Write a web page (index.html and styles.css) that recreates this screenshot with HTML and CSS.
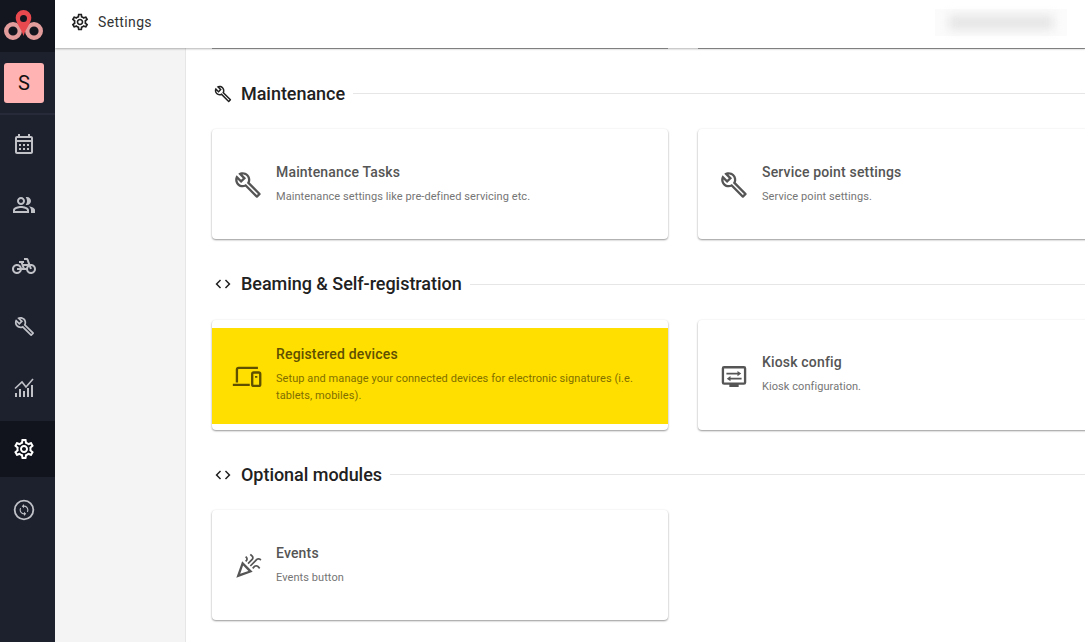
FILE: index.html
```html
<!DOCTYPE html>
<html lang="en">
<head>
  <meta charset="UTF-8">
  <meta name="viewport" content="width=device-width, initial-scale=1.0">
  <title>Settings</title>
  <link rel="stylesheet" href="styles.css">
</head>
<body>

<div class="app">
  <!-- Main navigation -->
  <nav class="sidebar">
    <div class="logo">
      <svg width="40" height="32" viewBox="0 0 40 32">
        <circle cx="9" cy="21" r="6.800" fill="none" stroke="#e39c9c" stroke-width="4.400"/>
        <circle cx="30" cy="21" r="6.800" fill="none" stroke="#e39c9c" stroke-width="4.400"/>
        <path d="M19.500 0a7.800 7.800 0 0 1 7.800 7.800c0 5-5.200 10-7.800 18.200-2.600-8.200-7.800-13.200-7.800-18.200A7.800 7.800 0 0 1 19.500 0z" fill="#e8494f"/>
        <circle cx="19.500" cy="8.500" r="3.500" fill="#13161f"/>
      </svg>
    </div>
    <div class="avatar-wrap">
      <div class="avatar">S</div>
    </div>
    <a class="nav-item">
      <svg width="24" height="24" viewBox="0 0 24 24"><path d="M19 4h-1V2h-2v2H8V2H6v2H5c-1.100 0-2 .9-2 2v14c0 1.100.9 2 2 2h14c1.100 0 2-.9 2-2V6c0-1.100-.9-2-2-2zm0 16H5V10h14v10zm0-12H5V6h14v2zM9 14H7v-2h2v2zm4 0h-2v-2h2v2zm4 0h-2v-2h2v2zm-8 4H7v-2h2v2zm4 0h-2v-2h2v2zm4 0h-2v-2h2v2z"/></svg>
    </a>
    <a class="nav-item">
      <svg width="24" height="24" viewBox="0 0 24 24"><path d="M16.670 13.130C18.040 14.060 19 15.320 19 17v3h4v-3c0-2.180-3.570-3.470-6.330-3.870zM15 12c2.210 0 4-1.790 4-4s-1.790-4-4-4c-.47 0-.91.1-1.330.24C14.500 5.270 15 6.580 15 8s-.5 2.730-1.330 3.760c.42.14.86.24 1.330.24zM9 12c2.210 0 4-1.790 4-4s-1.790-4-4-4-4 1.790-4 4 1.790 4 4 4zm0-6c1.100 0 2 .9 2 2s-.9 2-2 2-2-.9-2-2 .9-2 2-2zM9 13c-2.670 0-8 1.340-8 4v3h16v-3c0-2.660-5.330-4-8-4zm6 5H3v-.99C3.200 16.290 6.300 15 9 15s5.800 1.290 6 2v1z"/></svg>
    </a>
    <a class="nav-item">
      <svg width="24" height="24" viewBox="0 0 24 24"><path d="M18.180 10l-1.700-4.680C16.190 4.530 15.440 4 14.600 4H12v2h2.600l1.460 4h-4.810l-.36-1H12V7H7v2h1.750l1.820 5H9.900c-.44-2.230-2.310-3.880-4.650-3.990C2.450 9.870 0 12.200 0 15c0 2.800 2.200 5 5 5 2.460 0 4.450-1.690 4.900-4h4.200c.44 2.230 2.310 3.880 4.650 3.990 2.800.13 5.250-2.190 5.250-5 0-2.800-2.200-5-5-5h-.82zM7.820 16c-.4 1.170-1.490 2-2.820 2-1.680 0-3-1.320-3-3s1.320-3 3-3c1.330 0 2.420.83 2.820 2H5v2h2.820zm6.280-2h-1.400l-.73-2H15c-.44.58-.76 1.250-.9 2zm4.900 4c-1.680 0-3-1.320-3-3 0-.93.41-1.730 1.050-2.280l.96 2.640 1.880-.68-.97-2.670c.03 0 .06-.01.09-.01 1.680 0 3 1.320 3 3s-1.330 3-3.010 3z"/></svg>
    </a>
    <a class="nav-item">
      <svg width="21" height="21" viewBox="0 0 24 24"><use href="#icon-build"/></svg>
    </a>
    <a class="nav-item">
      <svg width="24" height="24" viewBox="0 0 24 24"><path d="M3 17h2v4H3zM7 13h2v8H7zM11 15h2v6h-2zM15 12h2v9h-2zM19 9h2v12h-2z"/><path d="M3 12.500l7-6.500 4 5 7-8" fill="none" stroke="currentColor" stroke-width="1.600"/></svg>
    </a>
    <a class="nav-item is-active">
      <svg width="24" height="24" viewBox="0 0 24 24"><use href="#icon-settings"/></svg>
    </a>
    <a class="nav-item">
      <svg width="24" height="24" viewBox="0 0 24 24"><circle cx="12" cy="12" r="9.300" fill="none" stroke="currentColor" stroke-width="1.800"/><path transform="translate(5.400 5.400) scale(.55)" d="M12 4V1L8 5l4 4V6c3.310 0 6 2.690 6 6 0 1.010-.25 1.970-.7 2.800l1.460 1.460C19.540 15.030 20 13.570 20 12c0-4.420-3.580-8-8-8zm0 14c-3.310 0-6-2.690-6-6 0-1.010.25-1.970.7-2.800L5.240 7.740C4.460 8.970 4 10.430 4 12c0 4.420 3.580 8 8 8v3l4-4-4-4v3z"/></svg>
    </a>
  </nav>

  <div class="main">
    <header class="topbar">
      <svg class="topbar-icon" width="20" height="20" viewBox="0 0 24 24"><use href="#icon-settings"/></svg>
      <span class="topbar-title">Settings</span>
      <div class="user-box"><div class="user-blur"></div></div>
    </header>

    <div class="page">
      <aside class="subnav"></aside>

      <div class="content">
        <div class="card-row stub-row">
          <div class="card-stub"></div>
          <div class="card-stub"></div>
        </div>

        <section class="section">
          <h2 class="section-title">
            <svg width="18" height="18" viewBox="0 0 24 24"><use href="#icon-build"/></svg>
            <span>Maintenance</span>
          </h2>
          <div class="card-row">
            <div class="card">
              <div class="card-inner">
                <svg class="card-icon" width="28" height="28" viewBox="0 0 24 24"><use href="#icon-build"/></svg>
                <div class="card-text">
                  <h3>Maintenance Tasks</h3>
                  <p>Maintenance settings like pre-defined servicing etc.</p>
                </div>
              </div>
            </div>
            <div class="card">
              <div class="card-inner">
                <svg class="card-icon" width="28" height="28" viewBox="0 0 24 24"><use href="#icon-build"/></svg>
                <div class="card-text">
                  <h3>Service point settings</h3>
                  <p>Service point settings.</p>
                </div>
              </div>
            </div>
          </div>
        </section>

        <section class="section">
          <h2 class="section-title">
            <svg width="18" height="18" viewBox="0 0 24 24"><use href="#icon-code"/></svg>
            <span>Beaming &amp; Self-registration</span>
          </h2>
          <div class="card-row">
            <div class="card highlighted">
              <div class="card-inner">
                <svg class="card-icon line-icon" width="28" height="28" viewBox="0 0 24 24">
                  <path d="M2.500 17.500V6.500a1.500 1.500 0 0 1 1.500-1.500h16.500M-1 19.600h14.500"/>
                  <rect x="15.600" y="9" width="6.900" height="11.500" rx="1.300"/>
                  <path d="M19 12v1.500"/>
                </svg>
                <div class="card-text">
                  <h3>Registered devices</h3>
                  <p>Setup and manage your connected devices for electronic signatures (i.e. tablets, mobiles).</p>
                </div>
              </div>
            </div>
            <div class="card">
              <div class="card-inner">
                <svg class="card-icon" width="28" height="28" viewBox="0 0 24 24">
                  <path d="M3.500 3.500h17a2 2 0 0 1 2 2v12a2 2 0 0 1-2 2H16v2H8v-2H3.500a2 2 0 0 1-2-2v-12a2 2 0 0 1 2-2zm0 2v12h17v-12z" fill-rule="evenodd"/>
                  <path d="M5.500 9.200H15v1.500H5.500zM15 7.700l3.200 2.250L15 12.200zM9 13.500h9.500V15H9zM9 12l-3.200 2.250L9 16.500z"/>
                </svg>
                <div class="card-text">
                  <h3>Kiosk config</h3>
                  <p>Kiosk configuration.</p>
                </div>
              </div>
            </div>
          </div>
        </section>

        <section class="section">
          <h2 class="section-title">
            <svg width="18" height="18" viewBox="0 0 24 24"><use href="#icon-code"/></svg>
            <span>Optional modules</span>
          </h2>
          <div class="card-row">
            <div class="card">
              <div class="card-inner">
                <svg class="card-icon" width="28" height="28" viewBox="0 0 24 24"><path d="M2 22l14-5-9-9-5 14zm10.350-5.820L5.300 18.700l2.520-7.050 4.530 4.530zM14.530 12.530l5.590-5.590c.49-.49 1.280-.49 1.770 0l.59.59 1.060-1.060-.59-.59c-1.070-1.070-2.820-1.070-3.890 0l-5.590 5.590 1.060 1.060zM10.060 6.880l-.59.59 1.060 1.060.59-.59c1.070-1.070 1.070-2.820 0-3.890l-.59-.59-1.060 1.070.59.59c.48.48.48 1.280 0 1.760zM17.060 11.880l-1.590 1.590 1.060 1.060 1.590-1.590c.49-.49 1.280-.49 1.770 0l1.610 1.610 1.060-1.060-1.610-1.610c-1.080-1.070-2.820-1.070-3.890 0zM15.060 5.880l-3.590 3.590 1.060 1.060 3.590-3.590c1.070-1.070 1.070-2.820 0-3.890l-1.590-1.590-1.060 1.060 1.590 1.590c.48.490.48 1.290 0 1.770z"/></svg>
                <div class="card-text">
                  <h3>Events</h3>
                  <p>Events button</p>
                </div>
              </div>
            </div>
          </div>
        </section>
      </div>
    </div>
  </div>
</div>

<!-- Shared icons -->
<svg class="icon-defs" width="0" height="0">
  <defs>
    <path id="icon-build" d="M22.610 18.990l-9.080-9.080c.93-2.340.45-5.100-1.440-7C9.790.61 6.210.4 3.660 2.260L7.500 6.110 6.080 7.520 2.250 3.690C.39 6.230.6 9.820 2.900 12.110c1.860 1.860 4.570 2.350 6.890 1.480l9.110 9.110c.39.39 1.020.39 1.410 0l2.300-2.300c.4-.38.4-1.010 0-1.410zm-3 1.600l-9.460-9.460c-.61.45-1.290.72-2 .82-1.360.2-2.790-.21-3.830-1.250C3.370 9.760 2.930 8.500 3 7.260l3.090 3.090 4.240-4.240-3.090-3.090c1.240-.07 2.490.37 3.440 1.310 1.080 1.080 1.490 2.570 1.240 3.960-.12.71-.42 1.370-.88 1.960l9.450 9.450-.88.88z"/>
    <path id="icon-settings" d="M19.430 12.980c.04-.32.07-.64.07-.98 0-.34-.03-.66-.07-.98l2.110-1.650c.19-.15.24-.42.12-.64l-2-3.460c-.09-.16-.26-.25-.44-.25-.06 0-.12.01-.17.03l-2.490 1c-.52-.4-1.080-.73-1.690-.98l-.38-2.650C14.460 2.180 14.250 2 14 2h-4c-.25 0-.46.18-.49.42l-.38 2.650c-.61.25-1.170.59-1.690.98l-2.490-1c-.06-.02-.12-.03-.18-.03-.17 0-.34.09-.43.25l-2 3.460c-.13.22-.07.49.12.64l2.110 1.650c-.04.32-.07.65-.07.98 0 .33.03.66.07.98l-2.110 1.650c-.19.15-.24.42-.12.64l2 3.460c.09.16.26.25.44.25.06 0 .12-.01.17-.03l2.490-1c.52.4 1.080.73 1.690.98l.38 2.650c.03.24.24.42.49.42h4c.25 0 .46-.18.49-.42l.38-2.650c.61-.25 1.170-.59 1.690-.98l2.490 1c.06.02.12.03.18.03.17 0 .34-.09.43-.25l2-3.460c.12-.22.07-.49-.12-.64l-2.110-1.650zm-1.980-1.710c.04.31.05.52.05.73 0 .21-.02.43-.05.73l-.14 1.130.89.7 1.080.84-.7 1.210-1.270-.51-1.040-.42-.9.68c-.43.32-.84.56-1.250.73l-1.060.43-.16 1.130-.2 1.350h-1.400l-.19-1.350-.16-1.130-1.060-.43c-.43-.18-.83-.41-1.230-.71l-.91-.7-1.060.43-1.270.51-.7-1.210 1.080-.84.89-.7-.14-1.130c-.03-.31-.05-.54-.05-.74s.02-.43.05-.73l.14-1.130-.89-.7-1.080-.84.7-1.210 1.270.51 1.040.42.9-.68c.43-.32.84-.56 1.250-.73l1.060-.43.16-1.130.2-1.350h1.390l.19 1.350.16 1.130 1.060.43c.43.18.83.41 1.230.71l.91.7 1.060-.43 1.270-.51.7 1.210-1.070.85-.89.7.14 1.130zM12 8c-2.210 0-4 1.790-4 4s1.790 4 4 4 4-1.790 4-4-1.790-4-4-4zm0 6c-1.100 0-2-.9-2-2s.9-2 2-2 2 .9 2 2-.9 2-2 2z"/>
    <path id="icon-code" d="M9.400 16.600L4.800 12l4.600-4.600L8 6l-6 6 6 6zM14.600 16.600l4.600-4.600-4.600-4.600L16 6l6 6-6 6z"/>
  </defs>
</svg>

</body>
</html>
```

FILE: styles.css
```css
/* General Styling */
html, body {
  height: 100%;
}

body {
  margin: 0;
  overflow: hidden;
  background-color: #fff;
  color: #212121;
  font-family: 'Roboto', sans-serif;
}

.app {
  display: flex;
  height: 100vh;
}

.icon-defs {
  display: block;
}

/* Sidebar */
.sidebar {
  flex: 0 0 55px;
  display: flex;
  flex-direction: column;
  background-color: #1d212e;
  color: #c0c2c8;
}

.sidebar svg {
  fill: currentColor;
}

/* the items sit 7px left of the bar's centre */
.logo,
.avatar-wrap,
.nav-item {
  padding-right: 7px;
}

.logo {
  height: 52px;
  display: flex;
  align-items: center;
  justify-content: center;
  background-color: #13161f;
}

.avatar-wrap {
  height: 63px;
  box-sizing: border-box;
  padding-top: 11px;
  border-bottom: 2px solid #272b39;
  display: flex;
  justify-content: center;
}

.avatar {
  width: 40px;
  height: 40px;
  border-radius: 3px;
  background-color: #ffb3b3;
  color: #111;
  font-size: 20px;
  line-height: 40px;
  text-align: center;
}

.nav-item {
  height: 61px;
  display: flex;
  align-items: center;
  justify-content: center;
}

.nav-item:first-of-type {
  margin-top: -2px;
}

.nav-item.is-active {
  height: 56px;
  margin: 3px 0 2px;
  background-color: #11141c;
  color: #fff;
}

/* Main area */
.main {
  flex: 1;
  min-width: 0;
  display: flex;
  flex-direction: column;
}

.topbar {
  flex: 0 0 48px;
  display: flex;
  align-items: center;
  padding: 0 18px 4px 15px;
  box-sizing: border-box;
  position: relative;
  z-index: 2;
  background-color: #fff;
  box-shadow: 0 1px 2px rgba(0, 0, 0, 0.3);
}

.topbar-icon {
  fill: #212121;
}

.topbar-title {
  margin-left: 8px;
  font-size: 14px;
  letter-spacing: 0.35px;
  color: #333;
}

.user-box {
  width: 132px;
  height: 27px;
  margin-left: auto;
  display: flex;
  align-items: center;
  justify-content: center;
  background-color: #fbfbfb;
}

.user-blur {
  width: 104px;
  height: 15px;
  background-color: #e6e6e6;
  filter: blur(5px);
}

.page {
  flex: 1;
  min-height: 0;
  display: flex;
}

.subnav {
  flex: 0 0 130px;
  background-color: #f4f4f4;
  border-right: 1px solid #e6e6e6;
}

.content {
  flex: 1;
  min-width: 0;
  overflow: hidden;
  padding-left: 26px;
}

/* Sections */
.section {
  margin-bottom: 33px;
}

.section-title {
  height: 24px;
  margin: 0 0 23.5px;
  padding-left: 2px;
  display: flex;
  align-items: center;
  font-size: 18px;
  font-weight: 500;
  line-height: 24px;
  letter-spacing: -0.04px;
  white-space: nowrap;
}

.section-title svg {
  flex: none;
  margin-right: 9px;
  fill: #212121;
}

.section-title::after {
  content: "";
  flex: 1;
  height: 1px;
  margin-left: 8px;
  background-color: #e6e6e6;
}

/* Cards */
.card-row {
  display: grid;
  grid-template-columns: 456px 456px;
  gap: 30px;
}

.stub-row {
  height: 1px;
  margin-bottom: 32.5px;
}

.card-stub {
  height: 1px;
  background-color: #a0a0a0;
}

.card {
  height: 110px;
  box-sizing: border-box;
  padding: 8px 0 6px;
  border-radius: 4px;
  background-color: #fff;
  box-shadow: 0 1px 2px rgba(0, 0, 0, 0.4), 0 0 3px rgba(0, 0, 0, 0.04);
}

.card-inner {
  height: 96px;
  box-sizing: border-box;
  padding: 0 21px 0 22px;
  display: flex;
  align-items: center;
  gap: 14px;
  color: #555;
}

.card-icon {
  flex: none;
  overflow: visible;
  fill: currentColor;
}

.card-icon.line-icon {
  fill: none;
  stroke: currentColor;
  stroke-width: 2;
}

.card-text {
  padding-bottom: 2px;
}

.card h3 {
  margin: 0 0 8px;
  font-size: 14px;
  font-weight: 500;
  line-height: 16px;
  letter-spacing: 0.17px;
  color: #555;
}

.card p {
  margin: 0;
  font-size: 11px;
  line-height: 17px;
  letter-spacing: 0.07px;
  color: #757575;
}

.card.highlighted .card-inner {
  background-color: #ffdf00;
  color: #5f5000;
}

.card.highlighted h3 {
  color: #5f5000;
}

.card.highlighted p {
  color: #7f6f00;
}
```
